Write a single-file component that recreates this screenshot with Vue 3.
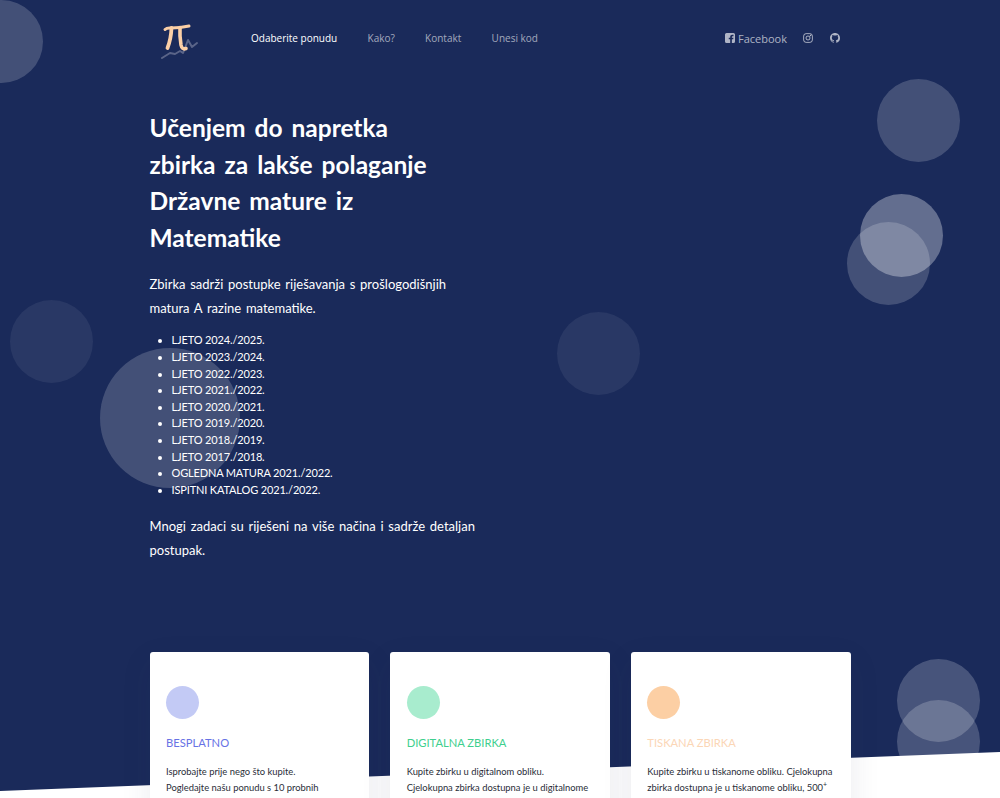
<template>
  <div class="page">
    <div class="hero-bg">
      <span v-for="(c, i) in circles" :key="i" class="bubble" :style="bubbleStyle(c)"></span>
    </div>
    <div class="slant"></div>

    <div class="container">
      <header class="topbar">
        <svg class="logo" width="48" height="48" viewBox="0 0 48 48" fill="none" stroke-linecap="round" stroke-linejoin="round">
          <path d="M12 38L20 33L25 34L30 31L33 33L38 20L42 27L47 23" stroke="#5a6488" stroke-width="2" />
          <path d="M15 9.500Q17 7.500 21 8Q30 8 39 6" stroke="#fbcfa6" stroke-width="3" />
          <path d="M21.500 8Q21 19 17.500 28" stroke="#fbcfa6" stroke-width="3.800" />
          <path d="M30 7.500Q29.500 16 31 25Q32 30 36 28.500" stroke="#fbcfa6" stroke-width="3.600" />
        </svg>
        <nav class="nav">
          <a v-for="(l, i) in links" :key="l" :class="{ active: i === 0 }">{{ l }}</a>
        </nav>
        <div class="social">
          <a class="fb">
            <svg width="10" height="10" viewBox="0 0 16 16"><path fill-rule="evenodd" d="M2.500 0h11A2.500 2.500 0 0116 2.500v11a2.500 2.500 0 01-2.500 2.500H11v-6h2.100l.4-2.500H11V6.300c0-.8.3-1.200 1.200-1.200h1.400V2.800c-.5-.1-1.200-.2-2-.2-2 0-3.300 1.200-3.300 3.300v1.600H6V10h2.300v6H2.500A2.500 2.500 0 010 13.500v-11A2.500 2.500 0 012.500 0z" fill="currentColor" /></svg>
            Facebook
          </a>
          <a>
            <svg width="10" height="10" viewBox="0 0 16 16" fill="none" stroke="currentColor" stroke-width="1.500"><rect x="1" y="1" width="14" height="14" rx="4" /><circle cx="8" cy="8" r="3.200" /><circle cx="12" cy="4" r=".6" fill="currentColor" /></svg>
          </a>
          <a>
            <svg width="10" height="10" viewBox="0 0 16 16"><path fill="currentColor" d="M8 0C3.580 0 0 3.580 0 8c0 3.540 2.290 6.530 5.470 7.590.4.070.55-.17.55-.38 0-.19-.01-.82-.01-1.490-2.010.37-2.530-.49-2.690-.94-.09-.23-.48-.94-.82-1.130-.28-.15-.68-.52-.01-.53.63-.01 1.080.58 1.230.82.72 1.210 1.870.87 2.330.66.07-.52.28-.87.51-1.070-1.780-.2-3.640-.89-3.640-3.950 0-.87.31-1.590.82-2.150-.08-.2-.36-1.020.08-2.120 0 0 .67-.21 2.200.82.64-.18 1.320-.27 2-.27.68 0 1.360.09 2 .27 1.530-1.040 2.200-.82 2.200-.82.44 1.100.16 1.920.08 2.120.51.56.82 1.270.82 2.150 0 3.070-1.870 3.750-3.650 3.950.29.25.54.73.54 1.480 0 1.070-.01 1.930-.01 2.200 0 .21.15.46.55.38A8.013 8.013 0 0016 8c0-4.420-3.580-8-8-8z" /></svg>
          </a>
        </div>
      </header>

      <section class="hero">
        <h1>Učenjem do napretka<br />zbirka za lakše polaganje<br />Državne mature iz<br />Matematike</h1>
        <p class="lead first">Zbirka sadrži postupke riješavanja s prošlogodišnjih matura A razine matematike.</p>
        <ul>
          <li v-for="y in years" :key="y">{{ y }}</li>
        </ul>
        <p class="lead last">Mnogi zadaci su riješeni na više načina i sadrže detaljan postupak.</p>
      </section>

      <section class="cards">
        <article v-for="c in cards" :key="c.title" class="card" :class="c.kind">
          <div class="dot"></div>
          <h3>{{ c.title }}</h3>
          <p v-for="line in c.lines" :key="line" v-html="line"></p>
        </article>
      </section>
    </div>
  </div>
</template>

<script setup>
const links = ['Odaberite ponudu', 'Kako?', 'Kontakt', 'Unesi kod']

const years = [
  'LJETO 2024./2025.',
  'LJETO 2023./2024.',
  'LJETO 2022./2023.',
  'LJETO 2021./2022.',
  'LJETO 2020./2021.',
  'LJETO 2019./2020.',
  'LJETO 2018./2019.',
  'LJETO 2017./2018.',
  'OGLEDNA MATURA 2021./2022.',
  'ISPITNI KATALOG 2021./2022.',
]

// x, y = centar, r = radijus, o = prozirnost
const circles = [
  { x: 1, y: 41, r: 41.5, o: 0.18 },
  { x: 918, y: 120.5, r: 41.5, o: 0.18 },
  { x: 901, y: 235.5, r: 41.5, o: 0.32 },
  { x: 888, y: 263.5, r: 41.5, o: 0.18 },
  { x: 51, y: 341.5, r: 41.5, o: 0.065 },
  { x: 598, y: 353.5, r: 41.5, o: 0.065 },
  { x: 170, y: 418, r: 70, o: 0.18 },
  { x: 938, y: 700.5, r: 41.5, o: 0.2 },
  { x: 938, y: 741.5, r: 41.5, o: 0.2 },
]

function bubbleStyle(c) {
  return {
    left: c.x - c.r + 'px',
    top: c.y - c.r + 'px',
    width: c.r * 2 + 'px',
    height: c.r * 2 + 'px',
    opacity: c.o,
  }
}

const cards = [
  {
    kind: 'free',
    title: 'BESPLATNO',
    lines: ['Isprobajte prije nego što kupite.', 'Pogledajte našu ponudu s 10 probnih'],
  },
  {
    kind: 'digital',
    title: 'DIGITALNA ZBIRKA',
    lines: ['Kupite zbirku u digitalnom obliku.', 'Cjelokupna zbirka dostupna je u digitalnome'],
  },
  {
    kind: 'print',
    title: 'TISKANA ZBIRKA',
    lines: ['Kupite zbirku u tiskanome obliku. Cjelokupna', 'zbirka dostupna je u tiskanome obliku, 500<sup>+</sup>'],
  },
]
</script>

<style>
html, body { margin: 0; background: #1a2a5a; }
</style>

<style scoped>
.page {
  position: relative;
  height: 798px;
  overflow: hidden;
  background: #1a2a5a;
  font-family: "Lato", "Liberation Sans", sans-serif;
  color: #fff;
}

.hero-bg { position: absolute; inset: 0; }
.bubble { position: absolute; border-radius: 50%; background: #fff; }

.slant {
  position: absolute;
  left: 0; right: 0; bottom: 0;
  height: 46px;
  background: #fff;
  clip-path: polygon(0 39px, 100% 0, 100% 100%, 0 100%);
}

.container {
  position: relative;
  width: 701px;
  margin: 0 auto;
}

.topbar {
  display: flex;
  align-items: center;
  height: 76px;
  font-family: "Open Sans", sans-serif;
}
.logo { flex-shrink: 0; margin-top: 12px; }

.nav {
  display: flex;
  gap: 30.300px;
  margin-left: 53.500px;
  font-size: 10px;
  font-weight: 500;
}
.nav a { color: rgba(255, 255, 255, 0.6); }
.nav a.active { color: #fff; }

.social {
  display: flex;
  align-items: center;
  gap: 17px;
  margin-left: auto;
  margin-right: 10.500px;
  color: rgba(255, 255, 255, 0.65);
  font-size: 11px;
}
.social a { display: flex; align-items: center; gap: 3px; }
.social .fb { margin-right: -1px; }

.hero { padding-top: 34px; }
h1 {
  margin: 0;
  font-size: 24.500px;
  line-height: 36.600px;
  font-weight: 700;
  word-spacing: 3px;
}
.lead {
  margin: 0;
  font-size: 13px;
  line-height: 24px;
  word-spacing: 1.400px;
}
.lead.first { margin-top: 16px; width: 310px; }
.lead.last { margin-top: 16px; width: 335px; }

ul {
  margin: 12px 0 0;
  padding-left: 22px;
  font-size: 11px;
  line-height: 16.600px;
  letter-spacing: -0.15px;
}

.cards {
  display: grid;
  grid-template-columns: repeat(3, 1fr);
  gap: 21px;
  margin-top: 90px;
}
.card {
  min-height: 300px;
  padding: 34px 16.500px;
  box-sizing: border-box;
  background: #fff;
  border-radius: 3px;
  box-shadow: 0 10px 30px rgba(50, 50, 93, 0.1);
  color: #2a2e38;
}
.dot { width: 33px; height: 33px; border-radius: 50%; }
.card h3 {
  margin: 16px 0 13px;
  font-size: 11.200px;
  line-height: 16px;
  font-weight: 400;
}
.card p {
  margin: 0;
  font-size: 9.400px;
  line-height: 16px;
  white-space: nowrap;
}
.card :deep(sup) { font-size: 7px; line-height: 0; }

.free .dot { background: #c3caf5; }
.free h3 { color: #6772e5; }
.digital .dot { background: #a8ecce; }
.digital h3 { color: #3ecf8e; }
.print .dot { background: #fccfa4; }
.print h3 { color: #fbd6b6; }
</style>
